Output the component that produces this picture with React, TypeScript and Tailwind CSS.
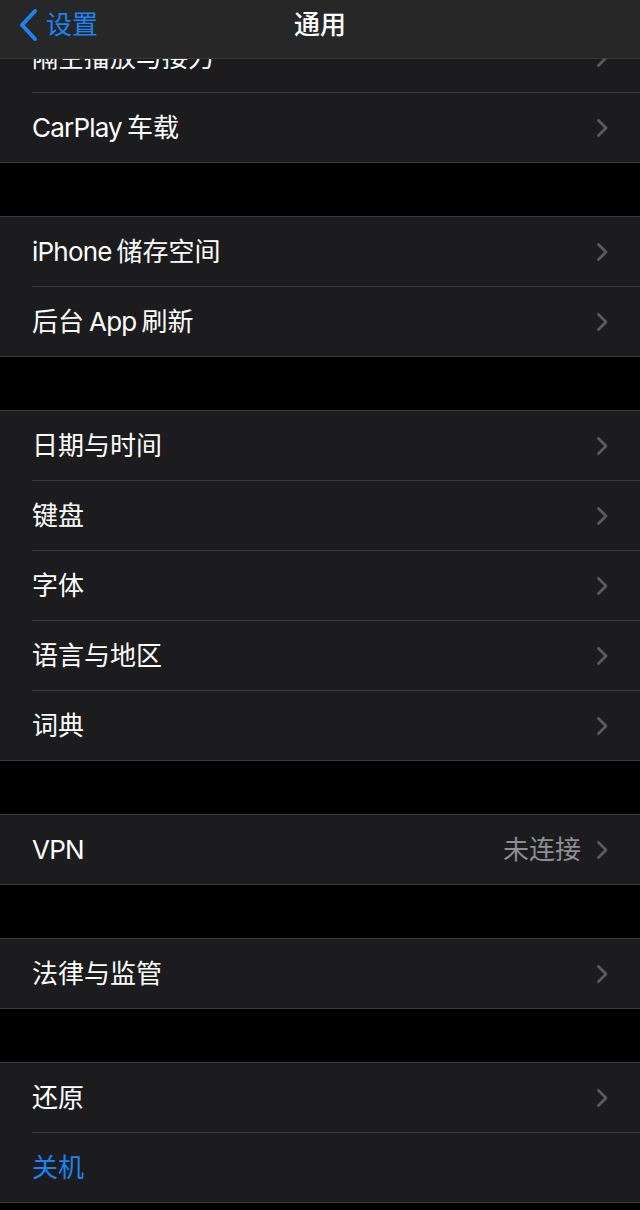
import React from "react";

const font = { fontFamily: '"Inter", "Noto Sans CJK SC", sans-serif' };

function Chevron() {
  return (
    <svg width="13" height="20" viewBox="0 0 13 20" className="shrink-0">
      <path d="M2.5 2.5 L10 10 L2.5 17.5" fill="none" stroke="#5c5c60" strokeWidth="2.8" strokeLinecap="round" strokeLinejoin="round" />
    </svg>
  );
}

type Row = { key: string; label: React.ReactNode; value?: string; blue?: boolean; noChevron?: boolean };

const Sp = () => <span className="inline-block w-[5px]" />;
const L = ({ children }: { children: React.ReactNode }) => <span className="tracking-[-0.8px]">{children}</span>;

function Group({ rows }: { rows: Row[] }) {
  return (
    <div className="bg-[#1c1c1e] border-y border-[#3a3a3c]">
      {rows.map((r, i) => (
        <div key={r.key}>
          {i > 0 && <div className="ml-[32px] h-px bg-[#3a3a3c]" />}
          <div className="h-[69px] flex items-center pl-[32px] pr-[31px]">
            <span className={`flex-1 text-[26px] leading-none ${r.blue ? "text-[#1a84f5]" : "text-white"}`}>{r.label}</span>
            {r.value && <span className="text-[26px] leading-none text-[#8e8e93] mr-[15px]">{r.value}</span>}
            {!r.noChevron && <Chevron />}
          </div>
        </div>
      ))}
    </div>
  );
}

export default function App() {
  const groups: Row[][] = [
    [
      { key: "airplay", label: "隔空播放与接力" },
      { key: "carplay", label: <><L>CarPlay</L><Sp />车载</> },
    ],
    [
      { key: "storage", label: <><L>iPhone</L><Sp />储存空间</> },
      { key: "refresh", label: <>后台<Sp /><L>App</L><Sp />刷新</> },
    ],
    [
      { key: "date", label: "日期与时间" },
      { key: "kb", label: "键盘" },
      { key: "font", label: "字体" },
      { key: "lang", label: "语言与地区" },
      { key: "dict", label: "词典" },
    ],
    [{ key: "vpn", label: <L>VPN</L>, value: "未连接" }],
    [{ key: "legal", label: "法律与监管" }],
    [
      { key: "reset", label: "还原" },
      { key: "off", label: "关机", blue: true, noChevron: true },
    ],
  ];
  return (
    <div className="relative w-[640px] h-[1210px] bg-black overflow-hidden" style={font}>
      <div className="absolute top-0 left-0 right-0 z-10 h-[59px] bg-[#272727] border-b border-[#3b3b3d] flex items-center">
        <div className="absolute left-[18px] top-0 h-[50px] flex items-center gap-[6px] text-[#1a84f5]">
          <svg width="22" height="34" viewBox="0 0 22 34">
            <path d="M17 3 L4 17 L17 31" fill="none" stroke="#1a84f5" strokeWidth="4" strokeLinecap="round" strokeLinejoin="round" />
          </svg>
          <span className="text-[26px] leading-none">设置</span>
        </div>
        <div className="flex-1 text-center text-white text-[26px] font-medium leading-none pb-[9px]">通用</div>
      </div>
      <div className="pt-[22px] flex flex-col gap-[53px]">
        {groups.map((g, i) => (
          <Group key={i} rows={g} />
        ))}
      </div>
    </div>
  );
}
